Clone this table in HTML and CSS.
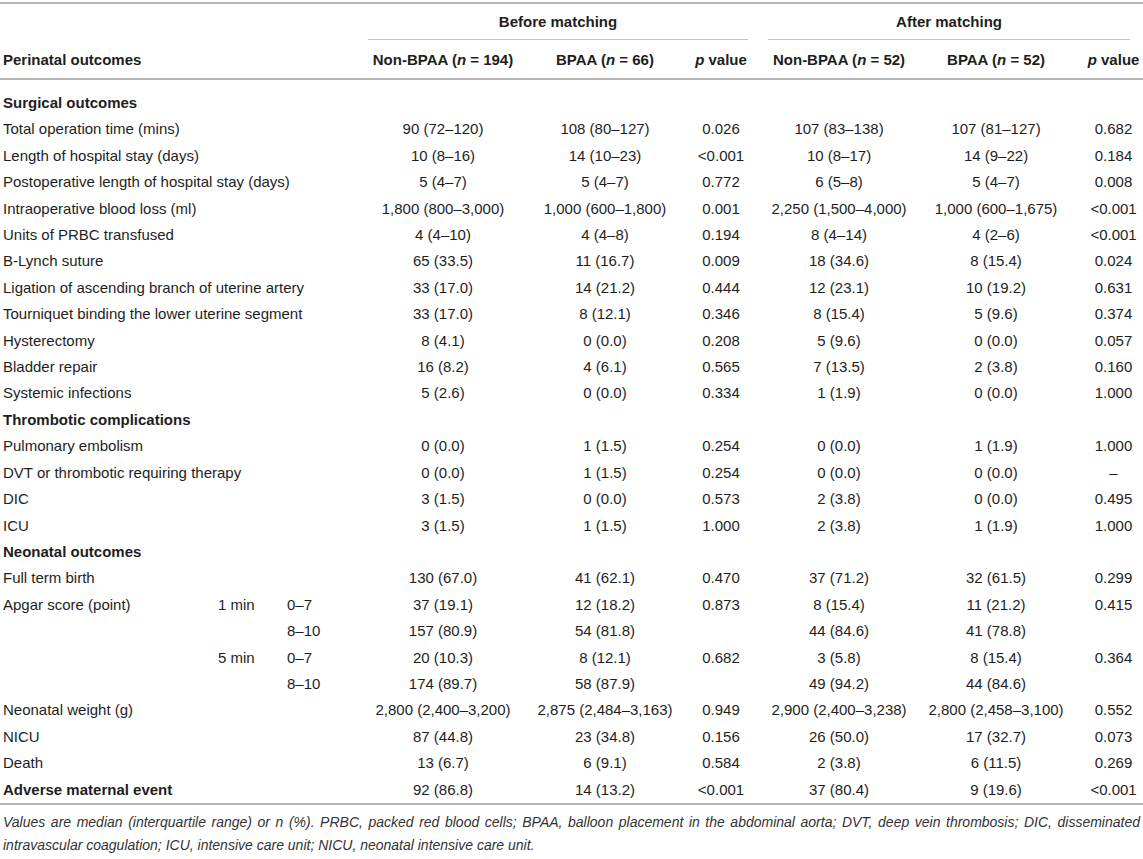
FILE: index.html
```html
<!DOCTYPE html>
<html>
<head>
<meta charset="utf-8">
<link rel="stylesheet" href="styles.css">
</head>
<body>
<div class="page">
<table class="tbl">
<colgroup>
<col class="c-label"><col class="c-sub1"><col class="c-sub2">
<col class="c-bn"><col class="c-bb"><col class="c-bp">
<col class="c-an"><col class="c-ab"><col class="c-ap">
</colgroup>
<thead>
<tr class="h1">
<th colspan="3"></th>
<th colspan="3"><div class="grp grp-before">Before matching</div></th>
<th colspan="3"><div class="grp grp-after">After matching</div></th>
</tr>
<tr class="h2">
<th colspan="3" class="lab">Perinatal outcomes</th>
<th>Non-BPAA (<i>n</i> = 194)</th>
<th>BPAA (<i>n</i> = 66)</th>
<th><i>p</i> value</th>
<th>Non-BPAA (<i>n</i> = 52)</th>
<th>BPAA (<i>n</i> = 52)</th>
<th class="last"><i>p</i> value</th>
</tr>
</thead>
<tbody>
<tr class="sec first"><td colspan="3" class="lab">Surgical outcomes</td><td></td><td></td><td></td><td></td><td></td><td class="last"></td></tr>
<tr><td colspan="3" class="lab">Total operation time (mins)</td><td>90 (72–120)</td><td>108 (80–127)</td><td>0.026</td><td>107 (83–138)</td><td>107 (81–127)</td><td class="last">0.682</td></tr>
<tr><td colspan="3" class="lab">Length of hospital stay (days)</td><td>10 (8–16)</td><td>14 (10–23)</td><td>&lt;0.001</td><td>10 (8–17)</td><td>14 (9–22)</td><td class="last">0.184</td></tr>
<tr><td colspan="3" class="lab">Postoperative length of hospital stay (days)</td><td>5 (4–7)</td><td>5 (4–7)</td><td>0.772</td><td>6 (5–8)</td><td>5 (4–7)</td><td class="last">0.008</td></tr>
<tr><td colspan="3" class="lab">Intraoperative blood loss (ml)</td><td>1,800 (800–3,000)</td><td>1,000 (600–1,800)</td><td>0.001</td><td>2,250 (1,500–4,000)</td><td>1,000 (600–1,675)</td><td class="last">&lt;0.001</td></tr>
<tr><td colspan="3" class="lab">Units of PRBC transfused</td><td>4 (4–10)</td><td>4 (4–8)</td><td>0.194</td><td>8 (4–14)</td><td>4 (2–6)</td><td class="last">&lt;0.001</td></tr>
<tr><td colspan="3" class="lab">B-Lynch suture</td><td>65 (33.5)</td><td>11 (16.7)</td><td>0.009</td><td>18 (34.6)</td><td>8 (15.4)</td><td class="last">0.024</td></tr>
<tr><td colspan="3" class="lab">Ligation of ascending branch of uterine artery</td><td>33 (17.0)</td><td>14 (21.2)</td><td>0.444</td><td>12 (23.1)</td><td>10 (19.2)</td><td class="last">0.631</td></tr>
<tr><td colspan="3" class="lab">Tourniquet binding the lower uterine segment</td><td>33 (17.0)</td><td>8 (12.1)</td><td>0.346</td><td>8 (15.4)</td><td>5 (9.6)</td><td class="last">0.374</td></tr>
<tr><td colspan="3" class="lab">Hysterectomy</td><td>8 (4.1)</td><td>0 (0.0)</td><td>0.208</td><td>5 (9.6)</td><td>0 (0.0)</td><td class="last">0.057</td></tr>
<tr><td colspan="3" class="lab">Bladder repair</td><td>16 (8.2)</td><td>4 (6.1)</td><td>0.565</td><td>7 (13.5)</td><td>2 (3.8)</td><td class="last">0.160</td></tr>
<tr><td colspan="3" class="lab">Systemic infections</td><td>5 (2.6)</td><td>0 (0.0)</td><td>0.334</td><td>1 (1.9)</td><td>0 (0.0)</td><td class="last">1.000</td></tr>
<tr class="sec"><td colspan="3" class="lab">Thrombotic complications</td><td></td><td></td><td></td><td></td><td></td><td class="last"></td></tr>
<tr><td colspan="3" class="lab">Pulmonary embolism</td><td>0 (0.0)</td><td>1 (1.5)</td><td>0.254</td><td>0 (0.0)</td><td>1 (1.9)</td><td class="last">1.000</td></tr>
<tr><td colspan="3" class="lab">DVT or thrombotic requiring therapy</td><td>0 (0.0)</td><td>1 (1.5)</td><td>0.254</td><td>0 (0.0)</td><td>0 (0.0)</td><td class="last">–</td></tr>
<tr><td colspan="3" class="lab">DIC</td><td>3 (1.5)</td><td>0 (0.0)</td><td>0.573</td><td>2 (3.8)</td><td>0 (0.0)</td><td class="last">0.495</td></tr>
<tr><td colspan="3" class="lab">ICU</td><td>3 (1.5)</td><td>1 (1.5)</td><td>1.000</td><td>2 (3.8)</td><td>1 (1.9)</td><td class="last">1.000</td></tr>
<tr class="sec"><td colspan="3" class="lab">Neonatal outcomes</td><td></td><td></td><td></td><td></td><td></td><td class="last"></td></tr>
<tr><td colspan="3" class="lab">Full term birth</td><td>130 (67.0)</td><td>41 (62.1)</td><td>0.470</td><td>37 (71.2)</td><td>32 (61.5)</td><td class="last">0.299</td></tr>
<tr><td class="lab">Apgar score (point)</td><td class="sub1">1 min</td><td class="sub2">0–7</td><td>37 (19.1)</td><td>12 (18.2)</td><td>0.873</td><td>8 (15.4)</td><td>11 (21.2)</td><td class="last">0.415</td></tr>
<tr><td class="lab"></td><td class="sub1"></td><td class="sub2">8–10</td><td>157 (80.9)</td><td>54 (81.8)</td><td></td><td>44 (84.6)</td><td>41 (78.8)</td><td class="last"></td></tr>
<tr><td class="lab"></td><td class="sub1">5 min</td><td class="sub2">0–7</td><td>20 (10.3)</td><td>8 (12.1)</td><td>0.682</td><td>3 (5.8)</td><td>8 (15.4)</td><td class="last">0.364</td></tr>
<tr><td class="lab"></td><td class="sub1"></td><td class="sub2">8–10</td><td>174 (89.7)</td><td>58 (87.9)</td><td></td><td>49 (94.2)</td><td>44 (84.6)</td><td class="last"></td></tr>
<tr><td colspan="3" class="lab">Neonatal weight (g)</td><td>2,800 (2,400–3,200)</td><td>2,875 (2,484–3,163)</td><td>0.949</td><td>2,900 (2,400–3,238)</td><td>2,800 (2,458–3,100)</td><td class="last">0.552</td></tr>
<tr><td colspan="3" class="lab">NICU</td><td>87 (44.8)</td><td>23 (34.8)</td><td>0.156</td><td>26 (50.0)</td><td>17 (32.7)</td><td class="last">0.073</td></tr>
<tr><td colspan="3" class="lab">Death</td><td>13 (6.7)</td><td>6 (9.1)</td><td>0.584</td><td>2 (3.8)</td><td>6 (11.5)</td><td class="last">0.269</td></tr>
<tr class="final"><td colspan="3" class="lab strong">Adverse maternal event</td><td>92 (86.8)</td><td>14 (13.2)</td><td>&lt;0.001</td><td>37 (80.4)</td><td>9 (19.6)</td><td class="last">&lt;0.001</td></tr>
</tbody>
</table>
<p class="note">Values are median (interquartile range) or n (%). PRBC, packed red blood cells; BPAA, balloon placement in the abdominal aorta; DVT, deep vein thrombosis; DIC, disseminated intravascular coagulation; ICU, intensive care unit; NICU, neonatal intensive care unit.</p>
</div>
</body>
</html>
```
FILE: styles.css
```css
html, body {
  margin: 0;
  padding: 0;
  background: #ffffff;
}
body {
  font-family: "Liberation Sans", Arial, sans-serif;
  color: #1e1e1e;
}
.page {
  width: 1143px;
  padding-top: 2px;
}
.tbl {
  width: 1143px;
  table-layout: fixed;
  border-collapse: collapse;
  border-top: 2px solid #b4b4b4;
  font-size: 15px;
}
.c-label { width: 210px; }
.c-sub1 { width: 60px; }
.c-sub2 { width: 92px; }
.c-bn { width: 162px; }
.c-bb { width: 162px; }
.c-bp { width: 70px; }
.c-an { width: 166px; }
.c-ab { width: 148px; }
.c-ap { width: 73px; }

.tbl th, .tbl td {
  padding: 0;
  text-align: center;
  white-space: nowrap;
}
.tbl th { font-weight: bold; }
.h1 th {
  height: 36px;
  vertical-align: bottom;
}
.grp {
  line-height: 35px;
  border-bottom: 1px solid #c4c4c4;
}
.grp-before { margin: 0 8px 0 6px; }
.grp-after { margin: 0 13px 0 12px; }
.h2 th {
  height: 38px;
  border-bottom: 2px solid #b4b4b4;
}
.h2 th i { font-weight: bold; }
.tbl .lab {
  text-align: left;
  padding-left: 3px;
}
.tbl .last {
  padding-left: 14px;
}
.tbl td {
  height: 26.4px;
  line-height: 26.4px;
}
.first td {
  padding-top: 10px;
}
.first td.last { padding-left: 14px; }
.sec .lab, .strong {
  font-weight: bold;
}
.tbl .sub1 {
  text-align: left;
  padding-left: 8px;
}
.tbl .sub2 {
  text-align: left;
  padding-left: 17px;
}
.final td {
  border-bottom: 2px solid #b4b4b4;
}
.note {
  margin: 6px 0 0 0;
  padding: 0 3px;
  font-style: italic;
  font-size: 14px;
  line-height: 23px;
  text-align: justify;
  color: #333333;
}
```
